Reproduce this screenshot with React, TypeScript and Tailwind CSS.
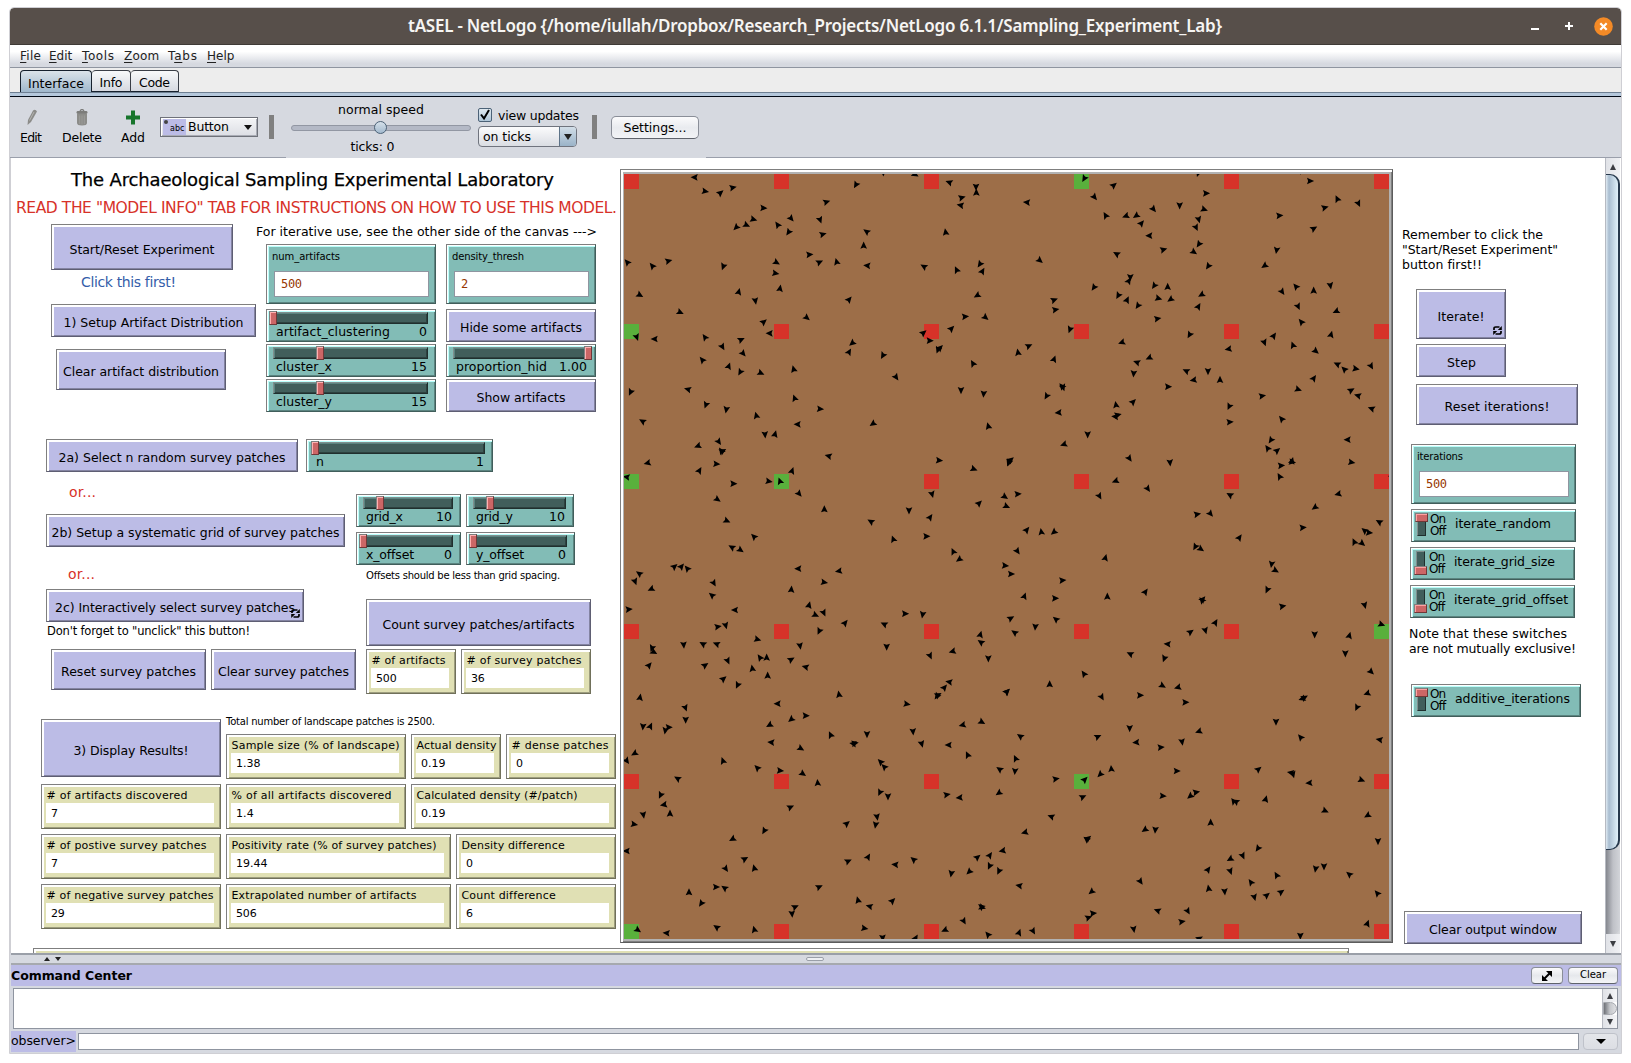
import React, { useLayoutEffect, useRef, useState } from "react";

/* Text whose letters are spaced so that the line takes the given width. */
function Fit({ w, children, className = "" }: { w: number; children: string; className?: string }) {
  const ref = useRef<HTMLSpanElement>(null);
  const [ls, setLs] = useState(0);
  useLayoutEffect(() => {
    if (!ref.current) return;
    const natural = ref.current.getBoundingClientRect().width - ls * children.length;
    setLs((w - natural) / Math.max(1, children.length - 1));
  }, [w, children]);
  return (
    <span ref={ref} className={"inline-block whitespace-pre " + className} style={{ letterSpacing: ls, marginRight: -ls }}>
      {children}
    </span>
  );
}

function Note({ className, w, children }: { className: string; w: number; children: string }) {
  return (
    <div className={"absolute leading-[20px] whitespace-pre " + className}>
      <Fit w={w}>{children}</Fit>
    </div>
  );
}

function Forever({ className }: { className: string }) {
  return (
    <svg viewBox="0 0 9 9" className={"absolute w-[9px] h-[9px] " + className}>
      <path d="M1 4 V2.5 Q1 1 2.8 1 H6.5 M8 5 V6.5 Q8 8 6.2 8 H2.5" fill="none" stroke="#000" strokeWidth="1.7" />
      <path d="M8.8 0 V4 H4.8 Z M0.2 9 V5 H4.2 Z" fill="#000" />
    </svg>
  );
}

function Button({ className, w, forever, children }: { className: string; w: number; forever?: string; children: string }) {
  return (
    <button
      className={
        "absolute flex items-center justify-center pt-[5px] text-[12.5px] leading-[16px] bg-[#bcbce6] border border-t-[#7f7f7f] border-l-[#7f7f7f] border-b-[#5e5e73] border-r-[#5e5e73] shadow-[inset_2px_2px_0_#ffffff,inset_-1px_-1px_0_#8484a2] " +
        className
      }
    >
      <Fit w={w}>{children}</Fit>
      {forever && <Forever className={forever} />}
    </button>
  );
}

const teal =
  "absolute bg-[#82bcb6] border border-t-[#7f7f7f] border-l-[#7f7f7f] border-b-[#415e5b] border-r-[#415e5b] shadow-[inset_1px_1px_0_#ffffff,inset_2px_2px_0_#b9fffb,inset_-1px_-1px_0_#5b8480] ";

function Slider({ className, handle, name, nw, value, vw }: { className: string; handle: string; name: string; nw: number; value: string; vw: number }) {
  return (
    <div className={teal + "flex flex-col h-[33px] pl-[6px] pr-[7px] pt-[2px] " + className}>
      <div className="h-[12px] shrink-0 bg-[#415e5b] border border-t-[#7f8f8e] border-l-[#7f8f8e] border-b-[#202f2e] border-r-[#202f2e] shadow-[inset_1px_1px_0_#5b8480,inset_-1px_-1px_0_#2d413f]" />
      <div className="flex justify-between pl-[3px] pr-px text-[12.5px] leading-[16px]">
        <Fit w={nw}>{name}</Fit>
        <Fit w={vw}>{value}</Fit>
      </div>
      <div className={"absolute top-px w-[8px] h-[14px] bg-[#cc6666] border border-t-[#7f7f7f] border-l-[#7f7f7f] border-b-[#703838] border-r-[#703838] shadow-[inset_1px_1px_0_#ffb0b0] " + handle} />
    </div>
  );
}

function Input({ className, name, nw, value }: { className: string; name: string; nw: number; value: string }) {
  return (
    <div className={teal + "h-[60px] flex flex-col pl-[7px] pr-[6px] pt-[3px] " + className}>
      <div className="-ml-[2px] h-[23px] text-[10px] leading-[18px]">
        <Fit w={nw}>{name}</Fit>
      </div>
      <div className="h-[26px] flex items-center pl-[6px] bg-white border border-[#8f95a0] text-[#963700] text-[12px] font-[DejaVu_Sans_Mono,monospace]">
        <Fit w={value.length * 7}>{value}</Fit>
      </div>
    </div>
  );
}

function Monitor({ className, name, nw, value }: { className: string; name: string; nw: number; value: string }) {
  return (
    <div
      className={
        "absolute h-[45px] flex flex-col pl-[4px] pr-[6px] bg-[#e0e0b4] border border-t-[#7f7f7f] border-l-[#7f7f7f] border-b-[#70705a] border-r-[#70705a] shadow-[inset_2px_2px_0_#ffffff,inset_-1px_-1px_0_#9d9d7e] text-[11px] " +
        className
      }
    >
      <div className="h-[18px] leading-[22px] pl-[0.5px]">
        <Fit w={nw}>{name}</Fit>
      </div>
      <div className="h-[20px] leading-[22px] bg-white pl-[5px]">
        <Fit w={value.length * 6.9 - (value.includes(".") ? 3 : 0)}>{value}</Fit>
      </div>
    </div>
  );
}

function Switch({ className, on, name, nw }: { className: string; on?: boolean; name: string; nw: number }) {
  return (
    <div className={teal + "h-[33px] flex " + className}>
      <div className="ml-[5px] mt-[3px] w-[9px] h-[23px] bg-[#415e5b] border border-t-[#7f8f8e] border-l-[#7f8f8e] border-b-[#202f2e] border-r-[#202f2e]" />
      <div className={"absolute left-[3px] w-[13px] h-[9px] bg-[#cc6666] border border-t-[#7f7f7f] border-l-[#7f7f7f] border-b-[#703838] border-r-[#703838] shadow-[inset_1px_1px_0_#ffa0a0] " + (on ? "top-[3px]" : "top-[18px]")} />
      <div className="ml-[4px] mt-[3px] w-[25px] flex flex-col items-start text-[12px] leading-[12px]">
        <Fit w={16}>On</Fit>
        <Fit w={16}>Off</Fit>
      </div>
      <div className="mt-[5px] text-[12.5px] leading-[17px]">
        <Fit w={nw}>{name}</Fit>
      </div>
    </div>
  );
}

type Turtle = [number, number, number];

/* Turtles by quadrant of the world: x, y (thirds of a pixel) and heading. */
const nw: Turtle[] = [[224,37,272],[255,79,100],[301,84,50],[338,68,78],[430,129,92],[400,163,105],[379,180,115],[349,187,225],[473,180,325],[513,160,140],[506,201,215],[600,164,160],[608,208,75],[619,111,72],[708,59,210],[790,22,180],[885,28,120],[740,200,305],[731,242,0],[977,202,350],[988,52,290],[1068,65,180],[1069,83,0],[1025,98,75],[1022,121,280],[568,269,85],[598,292,65],[650,291,345],[742,302,275],[912,305,300],[1010,315,335],[1080,297,215],[1087,319,30],[469,292,120],[466,325,100],[310,304,200],[145,288,75],[97,303,320],[22,292,320],[59,390,120],[180,442,115],[356,381,15],[406,407,170],[480,371,10],[687,404,40],[560,458,130],[431,471,50],[449,505,270],[1072,391,240],[1035,455,85],[1096,457,130],[994,491,45],[910,504,50],[929,527,90],[954,554,200],[960,549,45],[50,516,160],[104,522,270],[255,517,325],[307,545,150],[363,524,65],[369,565,140],[247,585,320],[326,604,20],[361,621,210],[422,624,115],[521,613,345],[697,534,230],[687,561,30],[789,571,210],[828,636,145],[1059,596,330],[1023,675,180],[1091,686,185],[32,681,205],[204,673,285],[258,719,200],[319,733,190],[524,700,340],[600,732,95],[409,752,345],[68,769,300],[533,778,270],[759,776,235],[1105,784,345],[435,808,175],[465,808,15],[296,830,145],[234,843,250],[308,858,60],[304,858,325],[83,894,255],[289,897,95],[238,917,30],[626,873,285],[957,886,95],[1061,912,110],[1166,893,200],[20,936,280],[340,956,90],[446,949,100],[480,949,340],[516,918,20],[537,986,140],[292,1003,125],[936,987,165],[613,1033,0],[1077,1015,45],[1154,995,125],[1159,1024,115],[867,1036,180],[930,1057,35],[320,1067,115],[753,1070,300],[402,1115,315],[919,1114,90],[820,1123,340],[336,1147,300],[361,1155,125],[1000,1160,335]];
const ne: Turtle[] = [[238,40,210],[326,61,50],[268,96,140],[66,112,275],[302,152,330],[363,153,250],[394,152,235],[445,132,140],[409,175,40],[433,212,270],[524,121,180],[603,85,90],[597,133,110],[581,163,165],[573,187,155],[475,254,75],[582,237,215],[566,261,125],[580,24,200],[915,48,90],[959,128,75],[997,102,335],[1060,115,155],[886,17,180],[823,152,85],[926,191,60],[815,255,190],[779,302,235],[610,303,215],[335,267,300],[104,286,130],[376,336,180],[371,348,30],[267,367,215],[340,391,210],[366,405,25],[399,422,215],[448,362,215],[488,366,0],[460,400,105],[497,403,235],[590,389,240],[580,425,30],[457,461,80],[554,509,210],[147,405,70],[151,434,80],[195,493,200],[71,543,65],[39,563,350],[147,583,20],[351,532,250],[433,578,245],[396,592,290],[386,625,185],[544,618,295],[566,645,260],[609,618,180],[645,645,0],[671,552,260],[778,532,160],[806,513,35],[864,541,340],[831,380,145],[873,365,320],[926,377,0],[976,361,170],[879,424,155],[994,439,245],[889,471,320],[978,509,15],[932,558,130],[997,598,295],[1018,613,315],[1052,611,100],[1098,603,150],[926,640,35],[879,673,110],[1038,676,60],[1059,692,285],[1100,731,290],[771,693,80],[830,762,320],[489,665,90],[673,724,205],[674,771,85],[174,667,160],[171,664,320],[125,693,210],[161,743,265],[384,711,45],[333,720,350],[338,750,75],[331,755,275],[248,808,180],[177,838,250],[373,880,145],[495,892,175],[798,825,215],[788,850,325],[816,857,50],[828,902,85],[861,888,15],[861,891,100],[824,935,330],[1028,824,270],[1039,892,100],[17,885,50],[12,892,200],[332,948,250],[428,971,145],[283,993,150],[38,987,85],[675,990,300],[1000,987,255],[930,1027,235],[576,1048,80],[616,1046,140],[893,1088,85],[703,1118,35],[1123,1071,300],[1079,1097,310],[1092,1103,95],[1048,1131,335],[1071,1135,130],[65,1095,40],[109,1101,350],[147,1101,230],[37,1158,145],[571,1145,210],[587,1152,125],[1161,935,280]];
const sw: Turtle[] = [[163,35,50],[184,35,40],[202,41,320],[58,56,305],[45,79,160],[94,102,245],[281,84,150],[276,121,310],[535,41,270],[514,104,5],[657,48,260],[612,82,100],[1018,13,235],[1155,32,95],[26,163,85],[345,165,270],[567,151,15],[586,180,115],[611,173,155],[293,215,80],[317,211,165],[675,204,40],[793,208,295],[855,176,90],[908,178,190],[598,228,205],[412,253,105],[540,272,170],[191,269,175],[249,267,300],[290,267,290],[800,275,180],[1081,239,15],[1083,262,305],[96,279,200],[101,291,120],[87,331,40],[255,331,55],[323,317,155],[420,308,325],[440,308,0],[397,341,350],[513,314,60],[557,336,285],[930,302,155],[998,289,255],[1105,310,180],[310,372,50],[353,390,205],[443,362,0],[60,428,10],[657,419,350],[988,381,280],[973,398,40],[954,420,60],[951,423,215],[860,447,100],[1160,410,45],[473,446,270],[196,458,160],[197,494,180],[557,482,90],[514,493,230],[449,510,240],[69,514,185],[91,514,25],[146,517,90],[136,526,190],[454,562,275],[632,540,335],[741,537,180],[704,565,80],[700,566,280],[879,529,175],[905,566,165],[1028,510,255],[1085,501,120],[986,570,270],[542,580,120],[1043,600,335],[44,595,240],[20,617,145],[309,618,340],[412,639,315],[480,647,95],[548,656,125],[593,684,355],[782,621,315],[793,636,315],[1139,643,305],[173,671,300],[122,720,205],[132,749,260],[150,776,0],[70,779,170],[42,808,100],[980,719,80],[1019,728,265],[1137,714,235],[780,712,205],[804,724,180],[511,757,65],[680,806,50],[771,785,170],[767,809,190],[433,827,210],[338,852,240],[20,888,270],[374,912,60],[317,941,145],[403,940,345],[684,919,65],[744,906,30],[826,929,275],[881,914,310],[1148,887,260],[1072,907,50],[1109,901,35],[1109,933,205],[1137,948,205],[1048,950,225],[994,955,190],[597,996,65],[288,996,90],[314,999,305],[207,1012,0],[244,1045,215],[525,1056,65],[516,1076,175],[714,1036,345],[749,1054,285],[817,1038,45],[1084,1055,310],[1086,1057,110],[290,1117,305],[403,1124,345],[140,1134,275],[53,1125,125],[733,1120,100],[975,1125,245],[1031,1098,150],[1104,1139,320],[788,1148,175],[887,1149,30]];
const se: Turtle[] = [[301,9,15],[800,27,190],[811,46,120],[18,57,90],[172,76,85],[58,124,20],[150,130,90],[307,125,0],[421,111,35],[593,133,40],[591,136,320],[787,104,205],[832,154,80],[1079,150,165],[17,190,60],[153,193,310],[91,215,185],[29,233,305],[556,231,55],[601,226,165],[631,203,30],[929,238,180],[1033,242,15],[1129,208,110],[488,267,275],[376,297,295],[478,310,200],[1021,295,180],[237,357,325],[134,388,0],[1098,350,135],[290,426,150],[405,421,90],[472,392,120],[519,397,255],[541,442,90],[898,428,60],[892,431,250],[1087,415,250],[1056,457,205],[813,500,180],[6,410,45],[374,519,180],[582,529,250],[531,560,170],[394,562,265],[467,577,85],[46,544,305],[278,545,65],[887,547,320],[1124,554,280],[32,611,335],[30,648,185],[319,642,355],[286,658,225],[152,672,80],[239,674,45],[515,648,90],[760,643,50],[858,653,280],[864,658,165],[913,684,265],[1069,675,110],[233,726,65],[473,723,95],[573,712,80],[556,723,230],[686,739,325],[693,740,300],[782,733,15],[139,785,290],[617,803,0],[960,767,115],[1088,781,240],[60,832,255],[420,824,235],[451,824,185],[249,850,50],[245,853,310],[1119,858,180],[759,880,215],[713,902,155],[676,912,240],[609,944,35],[676,948,160],[738,982,325],[815,961,330],[932,941,190],[957,934,180],[1033,958,310],[406,979,145],[43,992,280],[260,1010,230],[611,1001,350],[659,1009,175],[748,1026,165],[785,1021,50],[828,1011,55],[1117,1015,320],[458,1067,290],[548,1068,150],[264,1075,85],[250,1088,70],[530,1100,80],[42,1133,20],[84,1128,150],[386,1122,170],[1087,1106,20],[886,1142,180],[582,1151,290]];

const green = ["3,0", "0,1", "0,2", "1,2", "5,3", "3,4", "0,5"];

function Turtles({ list, dx, dy }: { list: Turtle[]; dx: number; dy: number }) {
  return (
    <g transform={`translate(${dx} ${dy})`}>
      {list.map(([x, y, h], i) => (
        <path key={i} d="M0 -12.4 L-10 9 L0 5.6 L10 9 Z" transform={`translate(${x} ${y}) rotate(${h})`} />
      ))}
    </g>
  );
}

function World() {
  const idx = [0, 1, 2, 3, 4, 5];
  return (
    <div className="absolute left-[609px] top-[11px] w-[773px] h-[774px] pl-[3px] pt-[4px] bg-[#b2b2b2] border border-t-[#7f7f7f] border-l-[#7f7f7f] border-b-[#5c5c5c] border-r-[#5c5c5c] shadow-[inset_2px_2px_0_#ffffff,inset_-1px_-1px_0_#7f7f7f]">
      <svg viewBox="0 0 2295 2295" className="block w-[765px] h-[765px] bg-[#9d6e48]">
        {idx.map((r) =>
          idx.map((c) => (
            <rect key={r + "-" + c} x={c * 450} y={r * 450} width="45" height="45" fill={green.includes(c + "," + r) ? "#59b03c" : "#d73229"} />
          ))
        )}
        <Turtles list={nw} dx={-12} dy={-27} />
        <Turtles list={ne} dx={1143} dy={-27} />
        <Turtles list={sw} dx={-12} dy={1143} />
        <Turtles list={se} dx={1143} dy={1143} />
      </svg>
    </div>
  );
}

function TitleBar() {
  return (
    <div className="h-[37px] shrink-0 flex items-center bg-[#574f4a] rounded-t-[4px] border-b border-[#3f3a36] text-white">
      <div className="pl-[398px] font-['Noto_Sans',sans-serif] font-semibold text-[17px] leading-[24px] text-[#f6f5f3] w-[1521px] shrink-0">
        <Fit w={814}>{"tASEL - NetLogo {/home/iullah/Dropbox/Research_Projects/NetLogo 6.1.1/Sampling_Experiment_Lab}"}</Fit>
      </div>
      <div className="w-[8px] h-[2px] mt-[6px] bg-white" />
      <svg viewBox="0 0 8 8" className="ml-[26px] w-[8px] h-[8px] shrink-0">
        <path d="M4 0V8M0 4H8" stroke="#fff" strokeWidth="2" />
      </svg>
      <svg viewBox="0 0 19 19" className="ml-[21px] w-[19px] h-[19px] shrink-0">
        <circle cx="9.5" cy="9.5" r="9.3" fill="#f48a26" />
        <path d="M6.3 6.3L12.7 12.7M12.7 6.3L6.3 12.7" stroke="#fff" strokeWidth="2.2" />
      </svg>
    </div>
  );
}

function Menu({ pre = "", k, rest, className }: { pre?: string; k: string; rest: string; className: string }) {
  return (
    <div className={className}>
      {pre}
      <span className="underline underline-offset-2">{k}</span>
      {rest}
    </div>
  );
}

function MenuBar() {
  return (
    <div className="h-[23px] shrink-0 flex items-center pl-[10px] pb-px text-[12px] text-[#222] whitespace-nowrap bg-linear-to-b from-[#ffffff] from-30% to-[#d6d9e0] to-85% border-b border-[#8f95a0]">
      <Menu k="F" rest="ile" className="w-[29px] tracking-[0.3px]" />
      <Menu k="E" rest="dit" className="w-[33px]" />
      <Menu k="T" rest="ools" className="w-[42px] tracking-[0.6px]" />
      <Menu k="Z" rest="oom" className="w-[44px] tracking-[0.2px]" />
      <Menu pre="T" k="a" rest="bs" className="w-[39px] tracking-[0.8px]" />
      <Menu k="H" rest="elp" className="w-[40px]" />
    </div>
  );
}

function TabStrip() {
  const tab = "h-[22px] flex items-center justify-center pt-[4px] rounded-t-[4px] border text-[12.5px] leading-[16px] ";
  return (
    <>
      <div className="h-[24px] shrink-0 flex items-end pl-[10px] bg-[#ededed]">
        <div className={tab + "w-[72px] border-[#16202d] border-b-0 bg-linear-to-b from-[#dbe3ea] to-[#a0b8cc]"}>
          <Fit w={56}>Interface</Fit>
        </div>
        <div className={tab + "w-[39px] border-l-0 border-[#3a3e46] border-b-[#16202d] bg-linear-to-b from-[#f8f9fa] to-[#d6d9e0]"}>
          <Fit w={23}>Info</Fit>
        </div>
        <div className={tab + "w-[48px] border-l-0 border-[#3a3e46] border-b-[#16202d] bg-linear-to-b from-[#f8f9fa] to-[#d6d9e0]"}>
          <Fit w={31}>Code</Fit>
        </div>
      </div>
      <div className="h-[5px] shrink-0 bg-[#b5c8dc] border-t border-t-[#6e7f92] border-b border-b-[#000814]" />
    </>
  );
}

function Toolbar() {
  return (
    <div className="relative h-[61px] shrink-0 flex bg-[#d6d9e0] text-[12.5px] leading-[16px] border-b border-[#9a9fab]">
      <div className="ml-[10px] mt-[12px] w-[22px] flex flex-col items-center">
        <svg viewBox="0 0 12 17" className="w-[12px] h-[17px] ml-[2px]">
          <path d="M7 1.5 Q9.5 -0.3 11 2.5 L5 13 L1.5 16 L2 11 Z" fill="#8c8c89" />
          <path d="M8 3L3.5 11.5" stroke="#b3b3b0" />
        </svg>
        <div className="mt-[4px]"><Fit w={22}>Edit</Fit></div>
      </div>
      <div className="ml-[20px] mt-[12px] w-[40px] flex flex-col items-center">
        <svg viewBox="0 0 12 17" className="w-[12px] h-[17px]">
          <path d="M4 2 Q6 -1 8 2" fill="none" stroke="#7c7c7a" strokeWidth="1.3" />
          <rect x="0.5" y="2" width="11" height="3" rx="1.4" fill="#7c7c7a" />
          <path d="M1 4.5H11V14Q11 16.5 6 16.5Q1 16.5 1 14Z" fill="#8c8c89" />
          <path d="M3.7 6.5V15M6 6.5V15.5M8.3 6.5V15" stroke="#a0a09d" strokeWidth="0.8" />
        </svg>
        <div className="mt-[4px]"><Fit w={40}>Delete</Fit></div>
      </div>
      <div className="ml-[19px] mt-[12px] w-[24px] flex flex-col items-center">
        <svg viewBox="0 0 14 17" className="w-[14px] h-[17px]">
          <path d="M7 1.5V15.5M0 8.5H14" stroke="#17752c" strokeWidth="4" />
        </svg>
        <div className="mt-[4px]"><Fit w={24}>Add</Fit></div>
      </div>
      <div className="ml-[15px] mt-[20px] w-[98px] h-[20px] flex items-center pl-[2px] bg-linear-to-b from-[#f4f5f7] to-[#dcdee4] border border-[#6f727a] shadow-[inset_1px_1px_0_#fff,inset_-1px_-1px_0_#a9acb5]">
        <div className="relative w-[23px] h-[16px] shrink-0 bg-[#bcbce6] text-[8px] leading-[20px] pl-[7px]">
          abc
          <div className="absolute left-[1px] top-[1px] w-[4px] h-[4px] rounded-full bg-[#444]" />
        </div>
        <div className="ml-[2px] w-[56px]"><Fit w={41}>Button</Fit></div>
        <div className="w-0 h-0 border-x-[4.5px] border-x-transparent border-t-[5px] border-t-[#111]" />
      </div>
      <div className="ml-[11px] mt-[18px] w-[5px] h-[24px] bg-[#808080]" />
      <div className="ml-[17px] mt-[5px] w-[180px] flex flex-col items-center">
        <Fit w={86}>normal speed</Fit>
        <div className="relative mt-[3px] mb-[2px] w-full h-[13px] flex items-center">
          <div className="w-full h-[6px] rounded-full bg-[#b4b9c6] border border-[#9297a3]" />
          <div className="absolute left-[83px] top-0 w-[13px] h-[13px] rounded-full border border-[#4c6277] bg-linear-to-b from-[#d5e0ea] to-[#a3bace]" />
        </div>
        <div className="mr-[17px] mt-[3px]"><Fit w={44}>ticks: 0</Fit></div>
      </div>
      <div className="ml-[7px] mt-[11px] w-[101px]">
        <div className="flex h-[16px]">
          <div className="w-[14px] h-[14px] rounded-[2px] border border-[#4c6277] bg-linear-to-b from-[#dfe8ef] to-[#b0c6d8]">
            <svg viewBox="0 0 12 12" className="w-[12px] h-[12px]">
              <path d="M2 5.5L5 9.5L10 1" fill="none" stroke="#000" strokeWidth="2" />
            </svg>
          </div>
          <div className="ml-[6px]"><Fit w={81}>view updates</Fit></div>
        </div>
        <div className="mt-[2px] w-[99px] h-[21px] flex items-center rounded-[4px] border border-[#70747e] bg-linear-to-b from-[#fbfbfc] to-[#dadde3] overflow-hidden">
          <div className="pl-[4px] w-[81px]"><Fit w={48}>on ticks</Fit></div>
          <div className="w-[17px] h-full flex items-center justify-center border-l border-[#5d7388] bg-linear-to-b from-[#d2dee8] to-[#9ab3c8]">
            <div className="w-0 h-0 border-x-[4px] border-x-transparent border-t-[6px] border-t-[#222]" />
          </div>
        </div>
      </div>
      <div className="ml-[13px] mt-[18px] w-[5px] h-[24px] bg-[#808080]" />
      <button className="ml-[14px] mt-[19px] w-[88px] h-[23px] flex items-center justify-center rounded-[5px] border border-[#8a8e98] border-b-[#5f636c] bg-linear-to-b from-[#fbfbfc] via-[#e9ebef] to-[#f2f3f6]">
        <Fit w={63}>Settings...</Fit>
      </button>
      <div className="absolute left-[276px] -bottom-px w-[420px] h-px bg-[#d6d9e0]" />
    </div>
  );
}

function Canvas() {
  return (
    <div className="relative w-[1594px] bg-white overflow-hidden">
      {/* The model's free canvas: widgets stand where its author dropped them. */}
      <Note className="left-[60px] top-[12px] text-[18px] [-webkit-text-stroke:0.25px_#000]" w={483}>The Archaeological Sampling Experimental Laboratory</Note>
      <Note className="left-[5px] top-[40px] text-[15.5px] text-[#d73229]" w={601}>{'READ THE "MODEL INFO" TAB FOR INSTRUCTIONS ON HOW TO USE THIS MODEL.'}</Note>
      <Button className="left-[40px] top-[66px] w-[182px] h-[46px]" w={145}>Start/Reset Experiment</Button>
      <Note className="left-[70px] top-[114px] text-[14px] text-[#345da9]" w={95}>Click this first!</Note>
      <Button className="left-[40px] top-[146px] w-[205px] h-[33px]" w={180}>1) Setup Artifact Distribution</Button>
      <Button className="left-[45px] top-[191px] w-[170px] h-[41px]" w={156}>Clear artifact distribution</Button>
      <Note className="left-[245px] top-[64px] text-[12.5px]" w={341}>{"For iterative use, see the other side of the canvas --->"}</Note>
      <Input className="left-[255px] top-[86px] w-[170px]" name="num_artifacts" nw={68} value="500" />
      <Input className="left-[435px] top-[86px] w-[150px]" name="density_thresh" nw={72} value="2" />
      <Slider className="left-[255px] top-[151px] w-[170px]" handle="left-[2px]" name="artifact_clustering" nw={114} value="0" vw={7} />
      <Slider className="left-[255px] top-[186px] w-[170px]" handle="left-[49px]" name="cluster_x" nw={56} value="15" vw={16} />
      <Slider className="left-[255px] top-[221px] w-[170px]" handle="left-[49px]" name="cluster_y" nw={56} value="15" vw={16} />
      <Button className="left-[435px] top-[151px] w-[150px] h-[33px]" w={122}>Hide some artifacts</Button>
      <Slider className="left-[435px] top-[186px] w-[150px]" handle="left-[137px]" name="proportion_hid" nw={91} value="1.00" vw={28} />
      <Button className="left-[435px] top-[221px] w-[150px] h-[33px]" w={89}>Show artifacts</Button>

      <Button className="left-[35px] top-[281px] w-[252px] h-[33px]" w={227}>2a) Select n random survey patches</Button>
      <Slider className="left-[295px] top-[281px] w-[187px]" handle="left-[4px]" name="n" nw={7} value="1" vw={7} />
      <Note className="left-[58px] top-[324px] text-[14px] text-[#d73229]" w={27}>or...</Note>
      <Button className="left-[35px] top-[356px] w-[299px] h-[33px]" w={288}>2b) Setup a systematic grid of survey patches</Button>
      <Slider className="left-[345px] top-[336px] w-[105px]" handle="left-[19px]" name="grid_x" nw={37} value="10" vw={16} />
      <Slider className="left-[455px] top-[336px] w-[108px]" handle="left-[19px]" name="grid_y" nw={37} value="10" vw={16} />
      <Slider className="left-[345px] top-[374px] w-[105px]" handle="left-[2px]" name="x_offset" nw={48} value="0" vw={7} />
      <Slider className="left-[455px] top-[374px] w-[109px]" handle="left-[2px]" name="y_offset" nw={48} value="0" vw={7} />
      <Note className="left-[355px] top-[408px] text-[10px]" w={194}>Offsets should be less than grid spacing.</Note>
      <Note className="left-[57px] top-[406px] text-[14px] text-[#d73229]" w={27}>or...</Note>
      <Button className="left-[35px] top-[431px] w-[258px] h-[33px]" w={240} forever="right-[3px] bottom-[3px]">2c) Interactively select survey patches</Button>
      <Note className="left-[36px] top-[463px] text-[11.5px]" w={203}>{"Don't forget to \"unclick\" this button!"}</Note>
      <Button className="left-[355px] top-[441px] w-[225px] h-[47px]" w={192}>Count survey patches/artifacts</Button>
      <Button className="left-[40px] top-[491px] w-[155px] h-[41px]" w={135}>Reset survey patches</Button>
      <Button className="left-[200px] top-[491px] w-[145px] h-[41px]" w={131}>Clear survey patches</Button>
      <Monitor className="left-[355px] top-[491px] w-[90px]" name="# of artifacts" nw={74} value="500" />
      <Monitor className="left-[450px] top-[491px] w-[130px]" name="# of survey patches" nw={115} value="36" />

      <Button className="left-[30px] top-[561px] w-[180px] h-[58px]" w={115}>3) Display Results!</Button>
      <Note className="left-[215px] top-[554px] text-[10px]" w={209}>Total number of landscape patches is 2500.</Note>
      <Monitor className="left-[215px] top-[576px] w-[180px]" name="Sample size (% of landscape)" nw={168} value="1.38" />
      <Monitor className="left-[400px] top-[576px] w-[90px]" name="Actual density" nw={80} value="0.19" />
      <Monitor className="left-[495px] top-[576px] w-[110px]" name="# dense patches" nw={97} value="0" />
      <Monitor className="left-[30px] top-[626px] w-[180px]" name="# of artifacts discovered" nw={141} value="7" />
      <Monitor className="left-[215px] top-[626px] w-[180px]" name="% of all artifacts discovered" nw={160} value="1.4" />
      <Monitor className="left-[400px] top-[626px] w-[205px]" name="Calculated density (#/patch)" nw={161} value="0.19" />
      <Monitor className="left-[30px] top-[676px] w-[180px]" name="# of postive survey patches" nw={160} value="7" />
      <Monitor className="left-[215px] top-[676px] w-[225px]" name="Positivity rate (% of survey patches)" nw={205} value="19.44" />
      <Monitor className="left-[445px] top-[676px] w-[160px]" name="Density difference" nw={103} value="0" />
      <Monitor className="left-[30px] top-[726px] w-[180px]" name="# of negative survey patches" nw={167} value="29" />
      <Monitor className="left-[215px] top-[726px] w-[225px]" name="Extrapolated number of artifacts" nw={185} value="506" />
      <Monitor className="left-[445px] top-[726px] w-[160px]" name="Count difference" nw={94} value="6" />
      <div className="absolute left-[22px] top-[790px] w-[1316px] h-[20px] bg-[#e0e0b4] border border-[#7f7f7f] shadow-[inset_2px_2px_0_#ffffff,inset_-1px_0_0_#9d9d7e]" />

      <World />

      <Note className="left-[1391px] top-[67px] text-[12.5px]" w={141}>Remember to click the</Note>
      <Note className="left-[1391px] top-[82px] text-[12.5px]" w={156}>{'"Start/Reset Experiment"'}</Note>
      <Note className="left-[1391px] top-[97px] text-[12.5px]" w={80}>button first!!</Note>
      <Button className="left-[1405px] top-[131px] w-[90px] h-[50px]" w={47} forever="right-[3px] bottom-[3px]">Iterate!</Button>
      <Button className="left-[1405px] top-[186px] w-[90px] h-[33px] pl-px" w={29}>Step</Button>
      <Button className="left-[1405px] top-[226px] w-[162px] h-[41px]" w={105}>Reset iterations!</Button>
      <Input className="left-[1400px] top-[286px] w-[165px]" name="iterations" nw={46} value="500" />
      <Switch className="left-[1400px] top-[351px] w-[165px]" on name="iterate_random" nw={96} />
      <Switch className="left-[1399px] top-[389px] w-[165px]" name="iterate_grid_size" nw={101} />
      <Switch className="left-[1399px] top-[427px] w-[165px]" name="iterate_grid_offset" nw={114} />
      <Note className="left-[1398px] top-[466px] text-[12.5px]" w={158}>Note that these switches</Note>
      <Note className="left-[1398px] top-[481px] text-[12.5px]" w={167}>are not mutually exclusive!</Note>
      <Switch className="left-[1400px] top-[526px] w-[170px]" on name="additive_iterations" nw={115} />
      <Button className="left-[1393px] top-[753px] w-[178px] h-[33px]" w={128}>Clear output window</Button>
    </div>
  );
}

function Arrow({ up }: { up?: boolean }) {
  return up ? (
    <div className="w-0 h-0 border-x-[3.5px] border-x-transparent border-b-[6px] border-b-[#3b3d42]" />
  ) : (
    <div className="w-0 h-0 border-x-[3.5px] border-x-transparent border-t-[6px] border-t-[#3b3d42]" />
  );
}

function ScrollBar() {
  return (
    <div className="w-[15px] h-full flex flex-col border-l border-[#b7bac2] bg-linear-to-r from-[#85888f] via-[#c3c5ca] to-[#d8dade]">
      <div className="h-[22px] flex items-center justify-center pb-[4px] bg-linear-to-r from-[#e0e2e7] to-[#f0f1f4]"><Arrow up /></div>
      <div className="-mt-[6px] h-[676px] rounded-r-[10px] border border-l-0 border-[#26384c] border-r-2 bg-linear-to-r from-[#dfeaf2] via-[#a9bdd0] via-25% to-[#e0f1fa]" />
      <div className="flex-1 bg-linear-to-r from-[#85888f] via-[#bfc1c7] to-[#d2d4d9] rounded-b-[8px]" />
      <div className="h-[19px] flex items-center justify-center bg-linear-to-r from-[#e0e2e7] to-[#f0f1f4]"><Arrow /></div>
    </div>
  );
}

function CommandCenter() {
  const btn = "h-[17px] flex items-center justify-center rounded-[4px] border border-[#8a8e98] border-b-[#5f636c] bg-linear-to-b from-[#fbfbfc] via-[#e6e8ec] to-[#f4f5f7] ";
  return (
    <div className="flex-1 flex flex-col bg-[#d6d9e0] pl-px">
      <div className="h-[12px] shrink-0 flex items-center border-t-2 border-[#9a9fa8] border-b-2 border-b-[#a6a9ae]">
        <div className="ml-[33px] w-0 h-0 border-x-[3.5px] border-x-transparent border-b-[4px] border-b-[#222]" />
        <div className="ml-[5px] w-0 h-0 border-x-[3.5px] border-x-transparent border-t-[4px] border-t-[#222]" />
        <div className="ml-[745px] w-[18px] h-[4px] rounded-[2px] bg-[#eef0f3] border border-[#9a9fa8]" />
      </div>
      <div className="h-[21px] shrink-0 flex items-center pr-[3px] bg-[#bcbce6]">
        <div className="flex-1 text-[12.5px] font-bold leading-[16px]"><Fit w={121}>Command Center</Fit></div>
        <button className={btn + "w-[32px] mr-[5px]"}>
          <svg viewBox="0 0 10 10" className="w-[10px] h-[10px]">
            <path d="M4 0H10V6ZM0 4V10H6Z" />
            <path d="M2 8L8 2" stroke="#000" strokeWidth="2" />
          </svg>
        </button>
        <button className={btn + "w-[50px] text-[10px] leading-[12px] pb-px"}><Fit w={26}>Clear</Fit></button>
      </div>
      <div className="ml-[2px] mt-[2px] mr-[3px] h-[41px] shrink-0 flex justify-end bg-white border border-[#8f95a0]">
        <div className="w-[15px] flex flex-col border-l border-[#b7bac2]">
          <div className="h-[13px] flex items-center justify-center bg-linear-to-r from-[#e0e2e7] to-[#f4f5f7]"><Arrow up /></div>
          <div className="h-[13px] rounded-r-[7px] border border-[#a5a8ae] bg-linear-to-r from-[#6f7278] via-[#c6c8cc] to-[#e0e1e4]" />
          <div className="h-[13px] flex items-center justify-center bg-linear-to-r from-[#e0e2e7] to-[#f4f5f7]"><Arrow /></div>
        </div>
      </div>
      <div className="mt-[2px] h-[21px] shrink-0 flex items-center">
        <div className="w-[65px] h-full shrink-0 bg-[#bcbce6] text-[12.5px] leading-[19px]"><Fit w={65}>{"observer>"}</Fit></div>
        <div className="ml-[2px] w-[1501px] h-[17px] bg-white border border-[#8f95a0]" />
        <div className="ml-[4px] w-[35px] h-[17px] flex items-center justify-center rounded-[4px] border border-[#bfc2ca] bg-linear-to-b from-[#e4e6ea] to-[#dcdee4]">
          <div className="w-0 h-0 border-x-[5px] border-x-transparent border-t-[5px] border-t-black" />
        </div>
      </div>
    </div>
  );
}

export default function App() {
  return (
    <div className="w-[1631px] h-[1063px] bg-white pt-[7px] pl-[9px] overflow-hidden text-black font-[DejaVu_Sans,Verdana,sans-serif]">
      <div className="w-[1613px] h-[1047px] flex flex-col rounded-t-[5px] border border-[#cfcfd4] overflow-hidden">
        <TitleBar />
        <MenuBar />
        <TabStrip />
        <Toolbar />
        <div className="h-[795px] shrink-0 flex border-l border-[#cfcfd4]">
          <Canvas />
          <ScrollBar />
        </div>
        <CommandCenter />
      </div>
    </div>
  );
}
